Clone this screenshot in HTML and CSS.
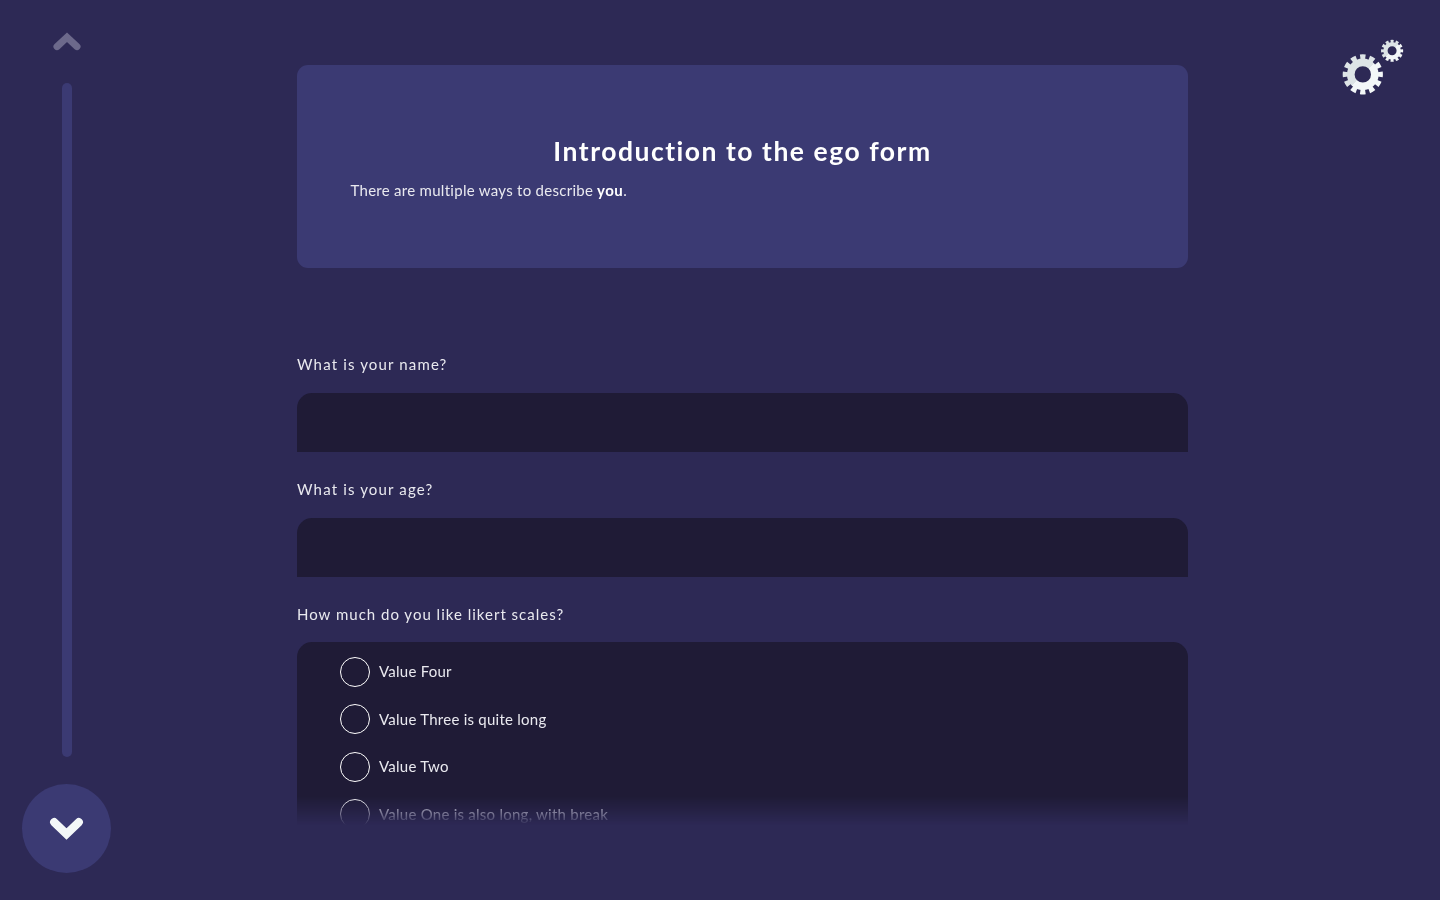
FILE: index.html
```html
<!DOCTYPE html>
<html lang="en">
<head>
<meta charset="utf-8">
<title>Ego form</title>
<link rel="stylesheet" href="styles.css">
</head>
<body>
<div class="stage">
  <nav class="navigation">
    <button class="nav-up" aria-label="Previous"><svg width="28" height="20" viewBox="0 0 28 20"><path d="M4 15.6 14 6.3 24 15.6" fill="none" stroke="currentColor" stroke-width="7" stroke-linecap="round"/></svg></button>
    <div class="progress"></div>
    <button class="nav-down" aria-label="Next"><svg width="37" height="26" viewBox="0 0 37 26"><path d="M6.2 6.2 18.5 18 30.8 6.2" fill="none" stroke="currentColor" stroke-width="8.2" stroke-linecap="round"/></svg></button>
  </nav>
  <main class="form-area">
    <section class="intro">
      <h1>Introduction to the ego form</h1>
      <p><span class="intro-text">There are multiple ways to describe</span> <strong>you</strong>.</p>
    </section>
    <form class="questions">
      <div class="field"><label class="q-name">What is your name?</label><div class="box"></div></div>
      <div class="field"><label class="q-age">What is your age?</label><div class="box"></div></div>
      <div class="field"><label class="q-scale">How much do you like likert scales?</label>
        <div class="scale">
          <div class="option"><i></i><span>Value Four</span></div>
          <div class="option"><i></i><span>Value Three is quite long</span></div>
          <div class="option"><i></i><span>Value Two</span></div>
          <div class="option"><i></i><span>Value One is also long, with break</span></div>
        </div>
      </div>
    </form>
  </main>
  <aside class="settings">
    <svg width="64" height="60" viewBox="1341 37 64 60">
      <defs>
        <linearGradient id="big" gradientUnits="userSpaceOnUse" x1="1348.7" y1="60.4" x2="1376.7" y2="88.4"><stop offset=".5" stop-color="#dde4e6"/><stop offset=".5" stop-color="#f3f7f8"/></linearGradient>
        <linearGradient id="small" gradientUnits="userSpaceOnUse" x1="1384" y1="42.7" x2="1400" y2="58.7"><stop offset=".5" stop-color="#dde4e6"/><stop offset=".5" stop-color="#f3f7f8"/></linearGradient>
      </defs>
      <g fill="none" stroke="url(#big)">
        <circle cx="1362.8" cy="74.4" r="12" stroke-width="7.6"/>
        <circle cx="1362.8" cy="74.4" r="17.5" stroke-width="5.2" pathLength="24" stroke-dasharray="1.16 .84" stroke-dashoffset=".58"/>
      </g>
      <g fill="none" stroke="url(#small)">
        <circle cx="1392.1" cy="50.8" r="6.7" stroke-width="4.4"/>
        <circle cx="1392.1" cy="50.8" r="9.6" stroke-width="2.9" pathLength="24" stroke-dasharray="1.2 .8" stroke-dashoffset=".6"/>
      </g>
    </svg>
  </aside>
</div>
</body>
</html>
```

FILE: styles.css
```css
* { box-sizing: border-box; }
body { margin: 0; background: #2d2955; color: #e9e9ef; font: 15px/22px Lato, "Open Sans", sans-serif; }
.stage { display: flex; height: 900px; overflow: hidden; }
.navigation { width: 297px; padding: 31px 0 27px 22px; display: flex; flex-direction: column; flex: none; }
button { border: 0; padding: 0; background: none; font: inherit; display: flex; justify-content: center; align-items: center; }
.nav-up { width: 90px; height: 20px; color: #6c698b; }
.progress { width: 10px; flex: 1; margin: 32px 0 27px 40px; border-radius: 5px; background: #3b3a73; }
.nav-down { width: 89px; height: 89px; border-radius: 50%; background: #3b3a73; color: #f3f7f8; }
.form-area { width: 891px; height: 826px; padding-top: 65px; flex: none; overflow: hidden; -webkit-mask-image: linear-gradient(#000 796px, transparent 825px); mask-image: linear-gradient(#000 796px, transparent 825px); }
.intro { height: 203px; padding: 68px 54px 0; border-radius: 11px; background: #3b3a73; }
h1 { margin: 0; font-size: 26.5px; line-height: 36px; font-weight: 700; letter-spacing: 1.52px; text-align: center; white-space: nowrap; color: #fff; }
p { margin: 10px 0 0 -.5px; }
.intro-text { letter-spacing: .28px; }
strong { letter-spacing: .5px; color: #fff; }
.questions { padding-top: 85px; }
.field { height: 125px; }
label { display: block; height: 40px; letter-spacing: 1px; }
.q-name, .q-age { letter-spacing: 1.15px; }
.box { height: 59px; border-radius: 15px 15px 0 0; background: #1f1b36; }
.scale { height: 240px; padding: 6.2px 43px; border-radius: 15px 15px 0 0; background: #1f1b36; margin-top: -1px; }
.option { height: 47.5px; display: flex; align-items: center; gap: 9px; letter-spacing: .25px; }
.option span { padding-bottom: 1.6px; }
.option i { width: 30px; height: 30px; border: 1px solid #fff; border-radius: 50%; }
.settings { padding: 37px 0 0 153px; flex: none; }
.settings svg { display: block; }
```
